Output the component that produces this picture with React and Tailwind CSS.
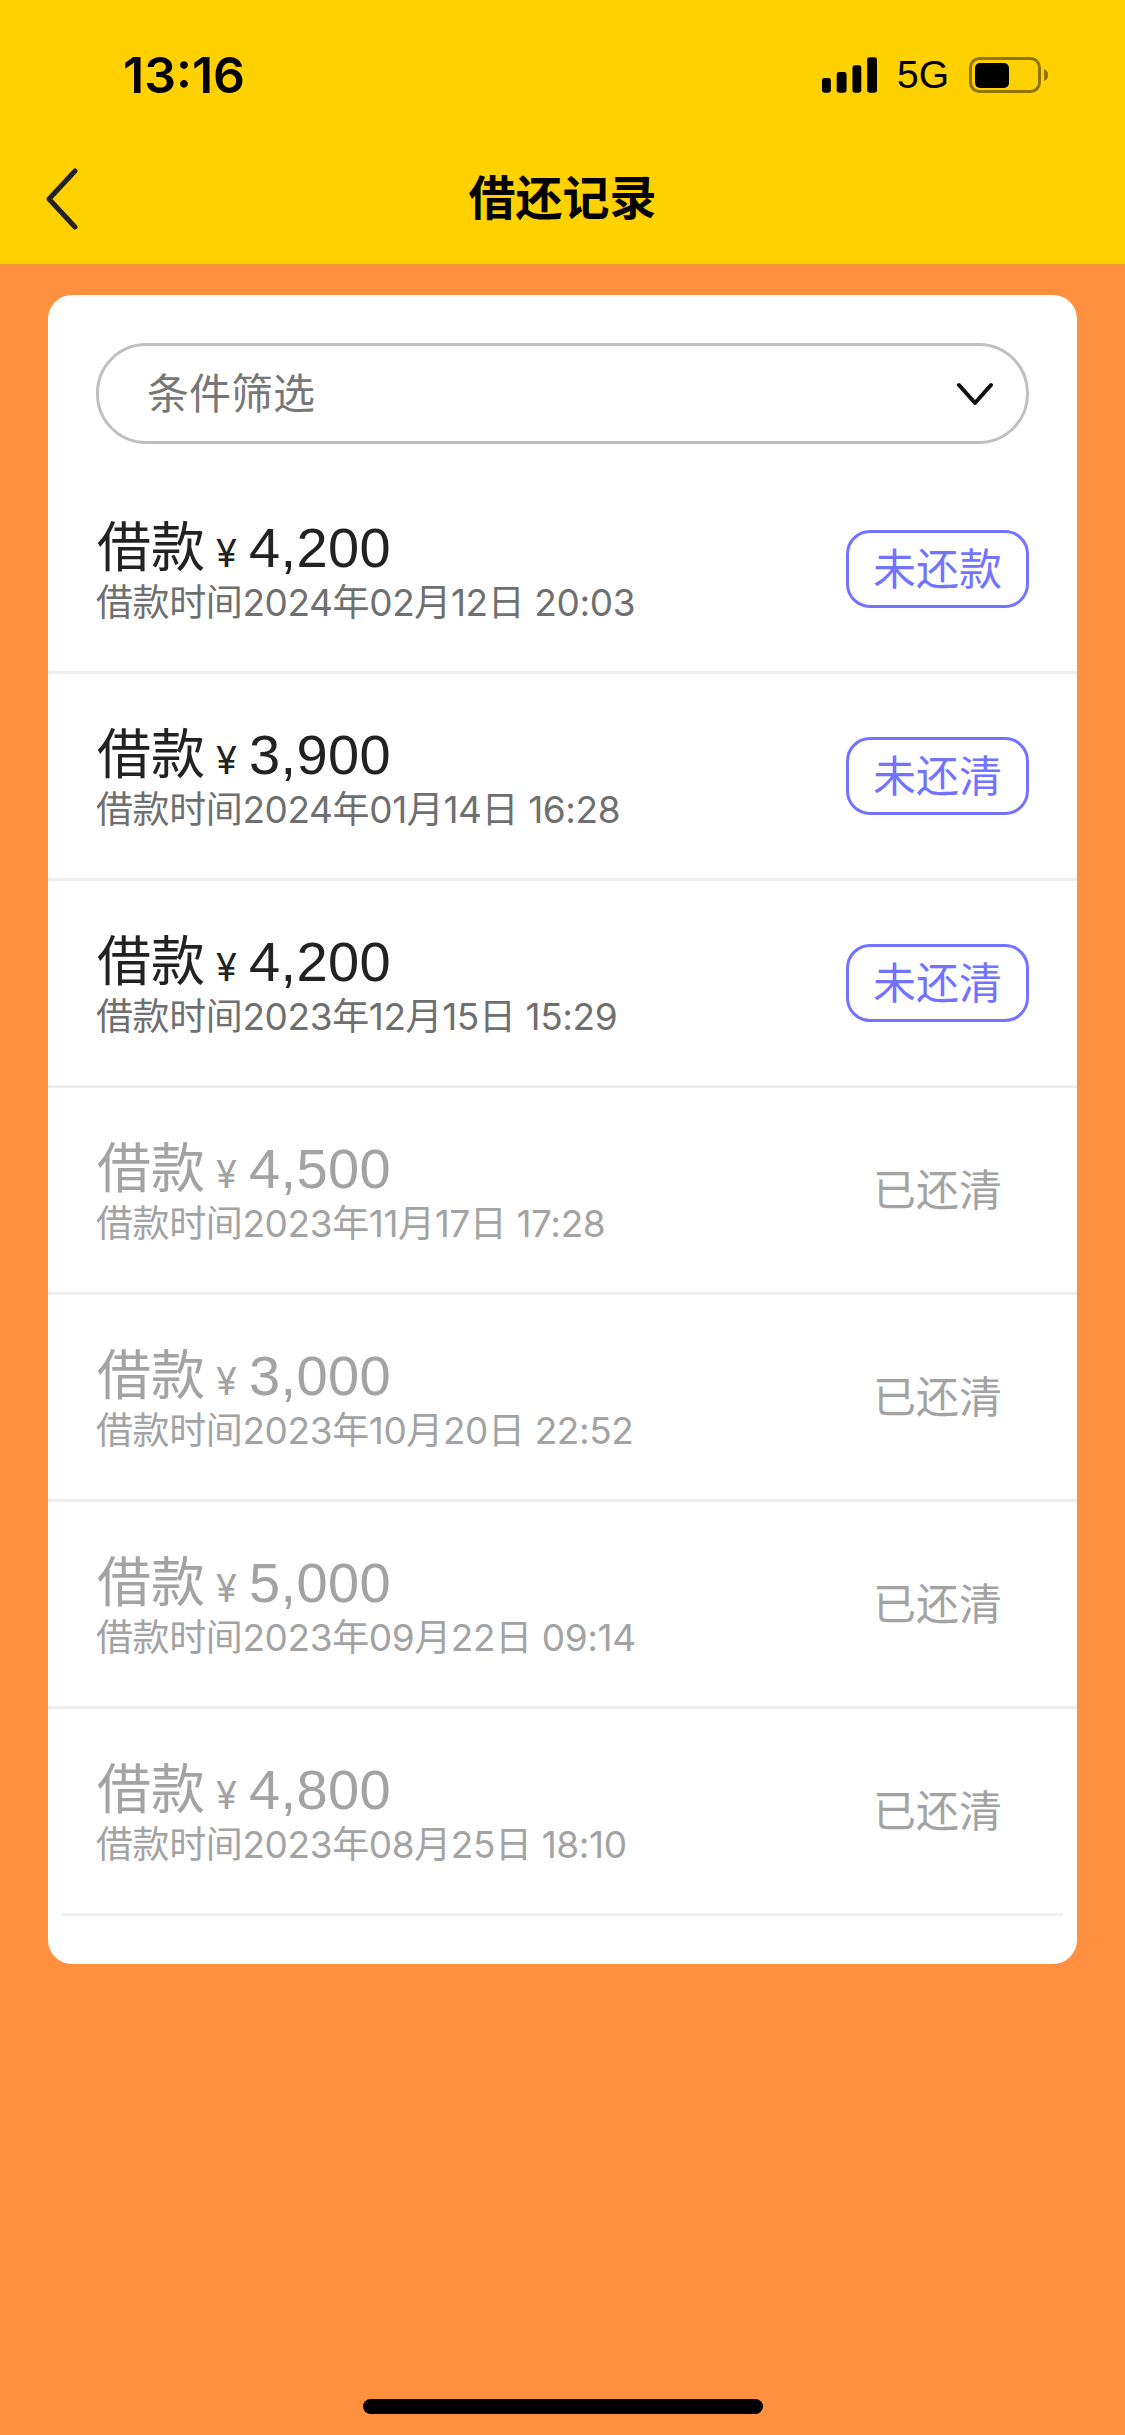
import React from 'react';

const records = [
  { amount: '4,200', time: '2024年02月12日 20:03', status: '未还款', open: true },
  { amount: '3,900', time: '2024年01月14日 16:28', status: '未还清', open: true },
  { amount: '4,200', time: '2023年12月15日 15:29', status: '未还清', open: true },
  { amount: '4,500', time: '2023年11月17日 17:28', status: '已还清', open: false },
  { amount: '3,000', time: '2023年10月20日 22:52', status: '已还清', open: false },
  { amount: '5,000', time: '2023年09月22日 09:14', status: '已还清', open: false },
  { amount: '4,800', time: '2023年08月25日 18:10', status: '已还清', open: false },
];

const font = "font-['Inter','Noto_Sans_CJK_SC',sans-serif]";

function StatusBar() {
  return (
    <div className="h-[105px] pl-[123px] pr-[76px] flex items-end justify-between">
      <span className="text-[50px] leading-[60px] font-semibold text-black font-['Inter',sans-serif]">13:16</span>
      <div className="flex items-center gap-[20px] h-[60px]">
        <svg width="55" height="36" viewBox="0 0 56 36" fill="#000">
          <rect x="0" y="21" width="9" height="15" rx="2.5" />
          <rect x="15" y="15" width="10" height="21" rx="2.5" />
          <rect x="31" y="8" width="9" height="28" rx="2.5" />
          <rect x="46" y="0" width="10" height="36" rx="2.5" />
        </svg>
        <span className="text-[39px] leading-[60px] text-black font-['Liberation_Sans',sans-serif]">5G</span>
        <svg width="80" height="36" viewBox="0 0 80 36">
          <rect x="1.5" y="1.5" width="69" height="33" rx="9" fill="none" stroke="#8f7400" strokeWidth="3" />
          <rect x="6" y="6" width="34" height="25" rx="5" fill="#000" />
          <path d="M75 12 C78 13 79 15 79 18 C79 21 78 23 75 24 Z" fill="#8f7400" />
        </svg>
      </div>
    </div>
  );
}

function Row({ item, last }) {
  const main = item.open ? 'text-[#222222]' : 'text-[#a3a3a3]';
  const sub = item.open ? 'text-[#6f6f6f]' : 'text-[#a3a3a3]';
  return (
    <div className={`h-[207px] flex items-center justify-between border-b-[3px] border-[#eeeeee] ${last ? 'mx-[14px] pl-[34px] pr-[34px]' : 'pl-[48px] pr-[48px]'}`}>
      <div className="flex flex-col pt-[2px]">
        <div className={`flex items-baseline h-[66px] leading-[62px] pl-[1px] ${main}`}>
          <span className="text-[54px]">借款</span>
          <span className="text-[38px] ml-[11px]">¥</span>
          <span className="text-[56px] ml-[12px] tracking-[0.4px] font-['Liberation_Sans',sans-serif]">{item.amount}</span>
        </div>
        <div className={`text-[37px] leading-[40px] tracking-[-0.4px] ${sub}`}>借款时间{item.time}</div>
      </div>
      {item.open ? (
        <div className="w-[183px] h-[78px] rounded-[24px] border-[3px] border-[#7274ff] text-[#7274ff] text-[43px] flex items-center justify-center">
          {item.status}
        </div>
      ) : (
        <div className="w-[183px] h-[78px] text-[#a3a3a3] text-[43px] flex items-center justify-center">
          {item.status}
        </div>
      )}
    </div>
  );
}

export default function App() {
  return (
    <div className={`w-[1125px] h-[2435px] bg-[#ff9040] flex flex-col relative overflow-hidden ${font}`}>
      <div className="h-[264px] bg-[#ffd100] shrink-0">
        <StatusBar />
        <div className="relative h-[159px] flex items-center justify-center pt-[28px]">
          <svg className="absolute left-[44px] top-[63px]" width="36" height="62" viewBox="0 0 36 62" fill="none">
            <path d="M31 3 L5 31 L31 59" stroke="#222" strokeWidth="5" strokeLinecap="round" strokeLinejoin="round" />
          </svg>
          <span className="text-[47px] font-bold text-black">借还记录</span>
        </div>
      </div>

      <div className="mx-[48px] mt-[31px] bg-white rounded-[24px] pt-[48px] pb-[48px]">
        <div className="mx-[48px] h-[101px] rounded-[50px] border-[3px] border-[#c0c0c0] flex items-center justify-between pl-[48px] pr-[33px]">
          <span className="text-[42px] text-[#777777]">条件筛选</span>
          <svg width="36" height="24" viewBox="0 0 36 24" fill="none">
            <path d="M2 3 L18 21 L34 3" stroke="#111" strokeWidth="4" strokeLinecap="round" strokeLinejoin="round" />
          </svg>
        </div>
        <div className="pt-[23px]">
          {records.map((r, i) => (
            <Row key={i} item={r} last={i === records.length - 1} />
          ))}
        </div>
      </div>

      <div className="absolute left-[363px] bottom-[21px] w-[400px] h-[15px] rounded-full bg-black" />
    </div>
  );
}
